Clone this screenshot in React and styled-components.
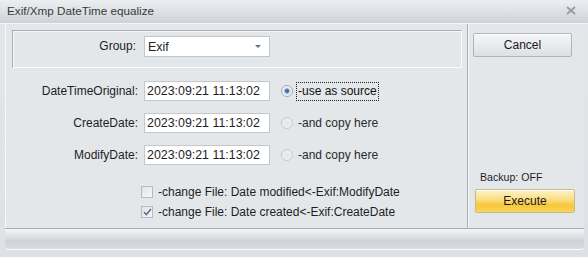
import React from "react";
import styled, { createGlobalStyle } from "styled-components";

const Global = createGlobalStyle`
  html, body {
    margin: 0;
    padding: 0;
    background: #e9ebee;
  }
  * { box-sizing: border-box; }
`;

const Window = styled.div`
  width: 588px;
  height: 257px;
  display: flex;
  flex-direction: column;
  background: linear-gradient(180deg, #e4e7ea, #dde0e4);
  font-family: "Liberation Sans", Arial, sans-serif;
  font-size: 12px;
  color: #1e1e1e;
  overflow: hidden;
`;

const TitleBar = styled.div`
  height: 24px;
  flex: none;
  display: flex;
  align-items: center;
  justify-content: space-between;
  padding: 0 12px 2px 7px;
  background: linear-gradient(180deg, #eceef1 0%, #dfe2e6 45%, #cfd3d9 100%);
  border-bottom: 1px solid #f4f5f7;
`;

const Title = styled.div`
  font-size: 11.7px;
  color: #3a3a3a;
`;

const Body = styled.div`
  height: 204px;
  flex: none;
  display: flex;
  margin: 0 4px 0 5px;
  background: #e4e7ea;
  border-left: 1px solid #f7f8f9;
`;

const LeftPane = styled.div`
  width: 462px;
  flex: none;
  padding: 6px 0 0 6px;
  border-right: 1px solid #a9adb2;
  box-shadow: 1px 0 0 #f6f7f8;
`;

const GroupBox = styled.div`
  width: 450px;
  height: 38px;
  display: flex;
  align-items: flex-start;
  padding-top: 5px;
  border: 1px solid;
  border-color: #a9adb2 #fbfbfc #fbfbfc #a9adb2;
  box-shadow: inset 1px 1px 0 #f6f7f8;
`;

const Label = styled.div`
  width: ${(p) => p.w}px;
  flex: none;
  text-align: right;
  font-size: 12px;
  line-height: 20px;
  white-space: nowrap;
  padding-right: ${(p) => p.gap}px;
`;

const Combo = styled.div`
  width: 126px;
  height: 21px;
  flex: none;
  display: flex;
  align-items: center;
  justify-content: space-between;
  padding: 0 8px 0 3px;
  background: #fff;
  border: 1px solid #c2c5ca;
  font-size: 12.5px;
`;

const Arrow = styled.span`
  width: 0;
  height: 0;
  border-left: 3px solid transparent;
  border-right: 3px solid transparent;
  border-top: 3px solid #6d7177;
`;

const Rows = styled.div`
  display: flex;
  flex-direction: column;
  gap: 12px;
  margin-top: 13px;
`;

const Row = styled.div`
  height: 20px;
  display: flex;
  align-items: center;
`;

const DateInput = styled.div`
  width: 126px;
  height: 20px;
  flex: none;
  padding: 0 2px;
  background: #fff;
  border: 1px solid #c4c7cc;
  font-size: 12.4px;
  line-height: 18px;
  white-space: nowrap;
  overflow: hidden;
`;

const Radio = styled.span`
  width: 12px;
  height: 12px;
  flex: none;
  margin: 0 3px 0 11px;
  border-radius: 50%;
  border: 1px solid ${(p) => (p.on ? "#a2a9b2" : "#c4c8cd")};
  background: ${(p) =>
    p.on
      ? "radial-gradient(circle, #2f5f9e 0, #5b86c0 2px, #dfe6ef 3px, #f4f6f8 5px)"
      : "radial-gradient(circle, #e3e5e8 0, #eceef0 5px)"};
`;

const OptionText = styled.span`
  font-size: 12px;
  line-height: 17px;
  padding: 0 1px;
  border: 1px dotted ${(p) => (p.focus ? "#222" : "transparent")};
  color: ${(p) => (p.focus ? "#111" : "#2a2a2a")};
  white-space: nowrap;
`;

const Checks = styled.div`
  display: flex;
  flex-direction: column;
  margin-top: 17px;
  padding-left: 129px;
`;

const CheckRow = styled.div`
  height: 20px;
  display: flex;
  align-items: center;
  gap: 5px;
  font-size: 12px;
  white-space: nowrap;
`;

const Box = styled.span`
  width: 12px;
  height: 12px;
  flex: none;
  display: flex;
  align-items: center;
  justify-content: center;
  border: 1px solid #b8bcc2;
  background: linear-gradient(135deg, #dfe2e6, #f7f8f9);
`;

const RightPane = styled.div`
  flex: 1;
  display: flex;
  flex-direction: column;
  padding: 9px 0 15px 5px;
`;

const Button = styled.div`
  width: ${(p) => p.w}px;
  height: 24px;
  display: flex;
  align-items: center;
  justify-content: center;
  margin-left: ${(p) => p.ml}px;
  border: 1px solid ${(p) => (p.primary ? "#c9b98a" : "#b0b4ba")};
  border-radius: 2px;
  font-size: 12px;
  color: #1a1a1a;
  background: ${(p) =>
    p.primary
      ? "linear-gradient(180deg, #fdf3c8 0%, #fbe08a 40%, #f8c73a 70%, #fbd55e 100%)"
      : "linear-gradient(180deg, #f4f5f7 0%, #e9ebee 50%, #dde0e4 100%)"};
  box-shadow: inset 0 1px 0 #fff;
`;

const Spacer = styled.div`
  flex: 1;
`;

const Backup = styled.div`
  margin: 0 0 5px 7px;
  font-size: 10.6px;
  line-height: 14px;
`;

const StatusBar = styled.div`
  height: 22px;
  flex: none;
  margin: 0 4px 0 5px;
  border-top: 1px solid #a9adb2;
  border-bottom: 1px solid #fbfbfc;
  border-radius: 0 0 4px 4px;
  background: linear-gradient(180deg, #f2f3f5 0%, #e6e8eb 25%, #cfd3d8 60%, #d8dbdf 100%);
`;

const rows = [
  { label: "DateTimeOriginal:", option: "-use as source", on: true },
  { label: "CreateDate:", option: "-and copy here" },
  { label: "ModifyDate:", option: "-and copy here" },
];

export default function App() {
  return (
    <>
      <Global />
      <Window>
        <TitleBar>
          <Title>Exif/Xmp DateTime equalize</Title>
          <svg width="10" height="9" viewBox="0 0 10 9">
            <path d="M1 1 L9 8 M9 1 L1 8" stroke="#979ca3" strokeWidth="1.8" />
          </svg>
        </TitleBar>
        <Body>
          <LeftPane>
            <GroupBox>
              <Label w={131} gap={8}>Group:</Label>
              <Combo>
                <span>Exif</span>
                <Arrow />
              </Combo>
            </GroupBox>
            <Rows>
              {rows.map((r) => (
                <Row key={r.label}>
                  <Label w={132} gap={6}>{r.label}</Label>
                  <DateInput>2023:09:21 11:13:02</DateInput>
                  <Radio on={r.on} />
                  <OptionText focus={r.on}>{r.option}</OptionText>
                </Row>
              ))}
            </Rows>
            <Checks>
              <CheckRow>
                <Box />
                -change File: Date modified&lt;-Exif:ModifyDate
              </CheckRow>
              <CheckRow>
                <Box>
                  <svg width="9" height="8" viewBox="0 0 9 8">
                    <path d="M1 4.2 L3.3 6.5 L8 1" fill="none" stroke="#5d6f8a" strokeWidth="1.6" />
                  </svg>
                </Box>
                -change File: Date created&lt;-Exif:CreateDate
              </CheckRow>
            </Checks>
          </LeftPane>
          <RightPane>
            <Button w={99} ml={0}>Cancel</Button>
            <Spacer />
            <Backup>Backup: OFF</Backup>
            <Button w={100} ml={2} primary>Execute</Button>
          </RightPane>
        </Body>
        <StatusBar />
      </Window>
    </>
  );
}
